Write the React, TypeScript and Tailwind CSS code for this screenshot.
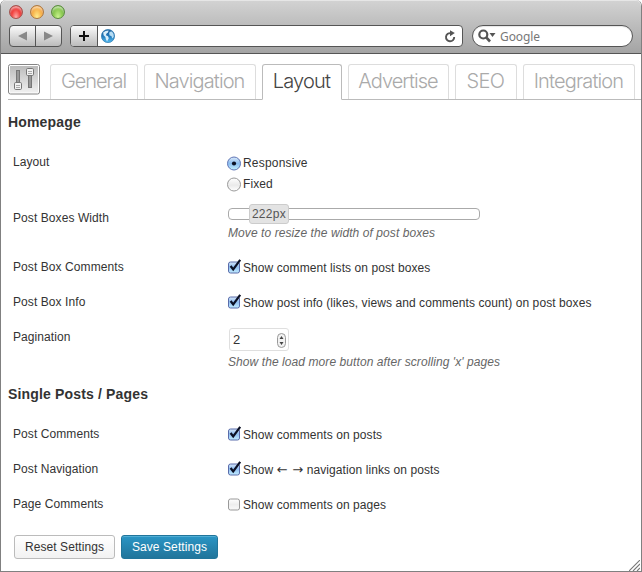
import React from 'react';

interface Tab {
  name: string;
  width: string;
  spacing: string;
  active?: boolean;
}

const tabs: Tab[] = [
  { name: 'General', width: 'w-[88px]', spacing: 'tracking-[-1.1px]' },
  { name: 'Navigation', width: 'w-[112px]', spacing: 'tracking-[-0.9px]' },
  { name: 'Layout', width: 'w-[80px]', spacing: 'tracking-[-0.8px]', active: true },
  { name: 'Advertise', width: 'w-[101px]', spacing: 'tracking-[-0.95px]' },
  { name: 'SEO', width: 'w-[62px]', spacing: 'tracking-[-0.6px]' },
  { name: 'Integration', width: 'w-[112px]', spacing: 'tracking-[-0.85px]' },
];

const SettingsIcon = () => (
  <svg width="32" height="31" viewBox="0 0 32 31" className="shrink-0">
    <defs>
      <linearGradient id="panel" x1="0" y1="0" x2="0" y2="1">
        <stop offset="0" stopColor="#bcbcbc" />
        <stop offset="1" stopColor="#f0f0f0" />
      </linearGradient>
    </defs>
    <rect x="0.5" y="0.5" width="31" height="29.5" rx="2" fill="#fff" stroke="#858585" />
    <rect x="2" y="2" width="28" height="26.5" fill="url(#panel)" />
    <rect x="8.5" y="6.5" width="3" height="13" fill="#999" stroke="#777" />
    <rect x="20.5" y="10.5" width="3" height="13" fill="#999" stroke="#777" />
    <rect x="6.5" y="18.5" width="7" height="7" rx="1.2" fill="#f2f2f2" stroke="#777" />
    <path d="M8 21.5h4M8 23.5h4" stroke="#aaa" />
    <rect x="18.5" y="4.5" width="7" height="7" rx="1.2" fill="#f2f2f2" stroke="#777" />
    <path d="M20 7.5h4M20 9.5h4" stroke="#aaa" />
  </svg>
);

const Globe = () => (
  <svg width="14" height="14" viewBox="0 0 14 14">
    <defs>
      <linearGradient id="sea" x1="0" y1="0" x2="0" y2="1">
        <stop offset="0" stopColor="#1e5f9c" />
        <stop offset="0.5" stopColor="#2277b8" />
        <stop offset="1" stopColor="#54bdf2" />
      </linearGradient>
    </defs>
    <circle cx="7" cy="7" r="6.6" fill="url(#sea)" stroke="#2e78ae" strokeWidth="0.7" />
    <path d="M2.2 3.6 4.6 2l3-.4L7 3.6 5.6 4.6 4.8 6.2 7 7.2l.8 2L6 12.6 4.8 10 4.4 8 2.6 6.2z" fill="#d9effb" />
    <path d="M8.6 2.8 11 2.6 12.6 5l.2 3-1.6 1.6-.8-2.6-1.8-.6-.4-1.8z" fill="#b5ddf5" />
  </svg>
);

const Checkbox = ({ checked }: { checked?: boolean }) => (
  <svg width="14" height="15" viewBox="0 0 14 15" className="mr-[2px] shrink-0">
    <defs>
      <linearGradient id="checkOn" x1="0" y1="0" x2="0" y2="1">
        <stop offset="0" stopColor="#d7e7f8" />
        <stop offset="0.45" stopColor="#8fbdf0" />
        <stop offset="1" stopColor="#c2edff" />
      </linearGradient>
      <linearGradient id="checkOff" x1="0" y1="0" x2="0" y2="1">
        <stop offset="0" stopColor="#fff" />
        <stop offset="0.5" stopColor="#eee" />
        <stop offset="1" stopColor="#fafafa" />
      </linearGradient>
    </defs>
    <rect
      x="0.5"
      y="3"
      width="11"
      height="11"
      rx="2"
      fill={checked ? 'url(#checkOn)' : 'url(#checkOff)'}
      stroke={checked ? '#5a6cab' : '#999'}
    />
    {checked && <path d="M2.6 7 5.2 10.4 12.2 .8" fill="none" stroke="#0b1024" strokeWidth="2.2" />}
  </svg>
);

const Radio = ({ checked }: { checked?: boolean }) => (
  <svg width="15" height="15" viewBox="0 0 15 15" className="-ml-px mr-[2px] mt-[2px] shrink-0">
    <defs>
      <linearGradient id="radioOn" x1="0" y1="0" x2="0" y2="1">
        <stop offset="0" stopColor="#dceafa" />
        <stop offset="0.5" stopColor="#8abcf0" />
        <stop offset="1" stopColor="#c4f1ff" />
      </linearGradient>
      <linearGradient id="radioOff" x1="0" y1="0" x2="0" y2="1">
        <stop offset="0" stopColor="#fff" />
        <stop offset="0.55" stopColor="#eaeaea" />
        <stop offset="1" stopColor="#fff" />
      </linearGradient>
    </defs>
    <circle
      cx="7"
      cy="7.5"
      r="6.5"
      fill={checked ? 'url(#radioOn)' : 'url(#radioOff)'}
      stroke={checked ? '#5f75b5' : '#999'}
    />
    {checked && <circle cx="7" cy="7.5" r="2.1" fill="#0b1024" />}
  </svg>
);

const Toolbar = () => (
  <div className="flex h-[54px] flex-col rounded-t-[5px] border-b border-[#555] bg-gradient-to-b from-[#d3d3d3] to-[#a4a4a4] shadow-[inset_0_1px_0_#e6e6e6]">
    <div className="flex h-[25px] gap-[7px] pl-[8px] pt-[5px]">
      <span className="h-[14px] w-[14px] rounded-full border border-[#a1534e] bg-[radial-gradient(ellipse_at_50%_95%,#ffb0ac_0%,#f2423f_50%,#c42528_100%)] shadow-[inset_0_2px_2px_#ffffff90]" />
      <span className="h-[14px] w-[14px] rounded-full border border-[#ac7840] bg-[radial-gradient(ellipse_at_50%_95%,#ffef92_0%,#f6ab42_60%,#d07424_100%)] shadow-[inset_0_2px_2px_#ffffff90]" />
      <span className="h-[14px] w-[14px] rounded-full border border-[#5a8c3e] bg-[radial-gradient(ellipse_at_50%_95%,#cdf593_0%,#82c348_60%,#4c9229_100%)] shadow-[inset_0_2px_2px_#ffffff90]" />
    </div>
    <div className="flex h-[22px] pl-[8px]">
      <div className="flex w-[53px] rounded-[4px] border border-[#555] bg-gradient-to-b from-[#fbfbfb] to-[#bcbcbc]">
        <span className="flex w-[26px] items-center justify-center border-r border-[#555]">
          <svg width="9" height="10" viewBox="0 0 9 10"><path d="M9 .5v9L0 5z" fill="#888" /></svg>
        </span>
        <span className="flex flex-1 items-center justify-center">
          <svg width="9" height="10" viewBox="0 0 9 10"><path d="M0 .5v9L9 5z" fill="#888" /></svg>
        </span>
      </div>
      <div className="ml-[8px] flex w-[393px] overflow-hidden rounded-[4px] border border-[#555] bg-white">
        <span className="flex w-[27px] items-center justify-center border-r border-[#555] bg-gradient-to-b from-[#fbfbfb] to-[#bcbcbc]">
          <svg width="10" height="10" viewBox="0 0 10 10"><path d="M5 0v10M0 5h10" stroke="#111" strokeWidth="2" /></svg>
        </span>
        <span className="flex flex-1 items-center justify-between pl-[3px] pr-[6px]">
          <Globe />
          <svg width="12" height="13" viewBox="0 0 12 13">
            <path d="M7 3.2A4.1 4.1 0 1 0 10.2 7" fill="none" stroke="#555" strokeWidth="1.9" />
            <path d="M6 .3 10.8 3.1 6 6.2z" fill="#555" />
          </svg>
        </span>
      </div>
      <div className="ml-[9px] flex w-[161px] items-center rounded-full border border-[#555] bg-white pl-[5px] shadow-[inset_0_1px_1px_#0000001a]">
        <svg width="19" height="14" viewBox="0 0 19 14">
          <circle cx="5.3" cy="5.5" r="4" fill="none" stroke="#555" strokeWidth="2.2" />
          <path d="m8 8.2 4 4.3" stroke="#555" strokeWidth="2.6" />
          <path d="M11.5 4h6l-3 4z" fill="#555" />
        </svg>
        <span className="ml-[3px] mt-[2px] font-['Noto_Sans',sans-serif] text-[12px] leading-[18px] tracking-[-0.1px] text-[#777]">Google</span>
      </div>
    </div>
  </div>
);

interface RowProps {
  label: string;
  height: string;
  children: React.ReactNode;
}

const Row: React.FC<RowProps> = ({ label, height, children }) => (
  <div className={`flex ${height}`}>
    <div className="w-[215px] leading-[16px]">{label}</div>
    <div className="leading-[16px]">{children}</div>
  </div>
);

interface CheckRowProps {
  label: string;
  checked?: boolean;
  children: React.ReactNode;
}

const CheckRow: React.FC<CheckRowProps> = ({ label, checked, children }) => (
  <Row label={label} height="h-[35px]">
    <div className="flex h-[16px]">
      <Checkbox checked={checked} />
      <span className="-ml-px pt-px">{children}</span>
    </div>
  </Row>
);

export default function App() {
  return (
    <div className="h-[572px] w-[642px] overflow-hidden rounded-t-[6px] border-x border-b border-[#808080] bg-white font-['Liberation_Sans',sans-serif] text-[12px] tracking-[0.08px] text-[#333]">
      <Toolbar />

      <div className="ml-[7px] flex h-[46px] border-b border-[#bbb] pt-[10px]">
        <SettingsIcon />
        <div className="ml-[10px] flex gap-[6px]">
          {tabs.map((tab) => (
            <div
              key={tab.name}
              className={`flex shrink-0 justify-center rounded-t-[3px] border bg-white pr-px font-['Inter',sans-serif] text-[20px] font-light leading-[33px] ${tab.width} ${tab.spacing} ${
                tab.active ? 'h-[36px] border-[#bbb] border-b-white text-[#444]' : 'h-[35px] border-[#ddd] border-b-0 text-[#aaa]'
              }`}
            >
              {tab.name}
            </div>
          ))}
        </div>
      </div>

      <div className="relative pl-[12px]">
        <h2 className="-ml-[5px] h-[54px] pt-[13px] text-[14px] font-bold leading-[18px] tracking-[0.16px]">Homepage</h2>

        <Row label="Layout" height="h-[56px]">
          <div className="flex h-[21px]">
            <Radio checked />
            <span className="-ml-px pt-px tracking-[0.2px]">Responsive</span>
          </div>
          <div className="flex h-[21px]">
            <Radio />
            <span className="-ml-px pt-px">Fixed</span>
          </div>
        </Row>

        <Row label="Post Boxes Width" height="h-[49px]">
          <div className="-mt-[2px] h-[12px] w-[252px] rounded-[4px] border border-[#aaa] bg-white">
            <div className="relative -top-[5px] left-[20px] h-[20px] w-[40px] rounded-[3px] border border-[#ccc] bg-[#e3e3e3] text-center leading-[18px] tracking-[0.3px] text-[#555]">
              222px
            </div>
          </div>
          <p className="mt-[5px] italic text-[#666]">Move to resize the width of post boxes</p>
        </Row>

        <CheckRow label="Post Box Comments" checked>Show comment lists on post boxes</CheckRow>
        <CheckRow label="Post Box Info" checked>Show post info (likes, views and comments count) on post boxes</CheckRow>

        <Row label="Pagination" height="h-[56px]">
          <div className="-mt-px ml-[1px] flex h-[23px] w-[60px] items-center justify-between rounded-[3px] border border-[#dfdfdf] pl-[3px] pr-px">
            <span className="text-[13px]">2</span>
            <svg width="10" height="16" viewBox="0 0 10 16" className="mt-px">
              <rect x="0.5" y="1.5" width="8" height="14" rx="4" fill="#f2f2f2" stroke="#999" />
              <path d="M2.5 7 4.5 4l2 3zM2.5 10l2 3 2-3z" fill="#444" />
            </svg>
          </div>
          <p className="mt-[3px] italic text-[#666]">Show the load more button after scrolling 'x' pages</p>
        </Row>

        <h2 className="-ml-[5px] h-[41px] text-[14px] font-bold leading-[18px] tracking-[0.16px]">Single Posts / Pages</h2>

        <CheckRow label="Post Comments" checked>Show comments on posts</CheckRow>
        <CheckRow label="Post Navigation" checked>
          Show <span className="font-['DejaVu_Sans',sans-serif] text-[13px] leading-none tracking-[0.2px]">← →</span> navigation links on posts
        </CheckRow>
        <CheckRow label="Page Comments">Show comments on pages</CheckRow>

        <div className="ml-[1px] mt-[4px] flex gap-[6px]">
          <button className="h-[24px] w-[101px] rounded-[3px] border border-[#bbb] bg-gradient-to-b from-white to-[#f2f2f2]">Reset Settings</button>
          <button className="h-[24px] w-[97px] rounded-[3px] border border-[#21759b] bg-gradient-to-b from-[#2a95c5] to-[#21759b] text-white shadow-[inset_0_1px_0_#78c8e680]">Save Settings</button>
        </div>

        <svg width="11" height="11" viewBox="0 0 11 11" className="absolute -bottom-[12px] right-[1px]">
          <path d="M0 11 11 0M4 11l7-7M8 11l3-3" stroke="#777" strokeWidth="1.1" />
        </svg>
      </div>
    </div>
  );
}
